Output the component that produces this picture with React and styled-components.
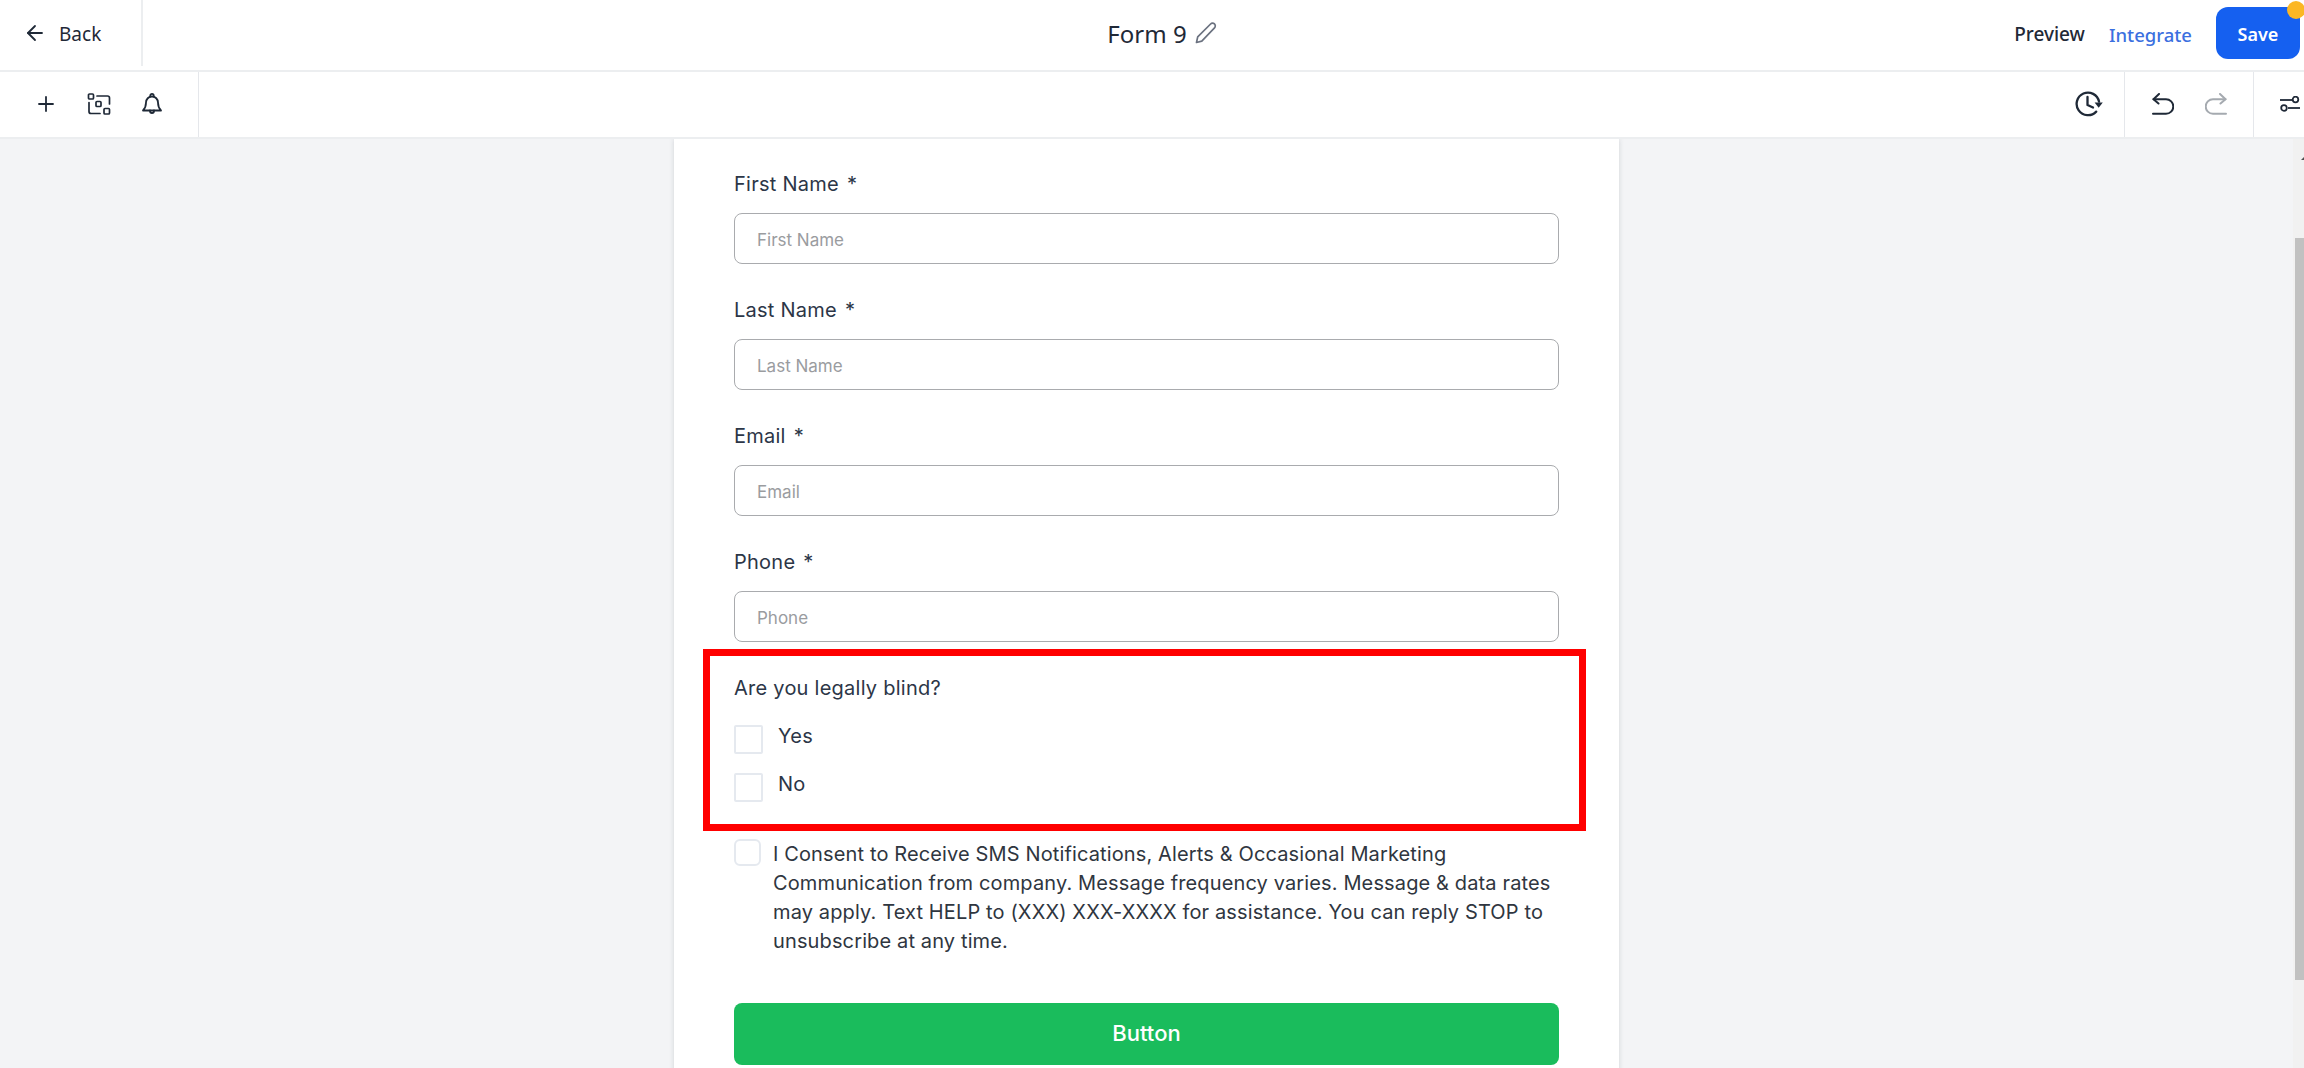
import React from "react";
import styled, { createGlobalStyle } from "styled-components";
import { ArrowLeft, Plus } from "lucide-react";

const Global = createGlobalStyle`
  html, body { margin: 0; padding: 0; height: 100%; overflow: hidden; background: #f3f4f6; }
  * { box-sizing: border-box; }
  body { font-family: "Inter", "Noto Sans", sans-serif; color: #1f2937; }
`;

const Page = styled.div`
  height: 1068px;
  display: flex;
  flex-direction: column;
`;

const TopBar = styled.header`
  height: 72px;
  flex: none;
  background: #fff;
  border-bottom: 2px solid #eceef0;
  padding-bottom: 4px;
  display: grid;
  grid-template-columns: 1fr auto 1fr;
  align-items: center;
  font-family: "Noto Sans", sans-serif;
`;

const BackLink = styled.div`
  justify-self: start;
  width: 143px;
  height: 66px;
  padding-left: 23px;
  border-right: 2px solid #eceef0;
  display: flex;
  align-items: center;
  gap: 12px;
  font-size: 19px;
  color: #1f2937;

  span {
    padding-top: 2px;
  }
`;

const Title = styled.div`
  margin-left: 20px;
  display: flex;
  align-items: center;
  gap: 8px;
  font-size: 24px;
  color: #1f2937;
`;

const TopActions = styled.div`
  justify-self: end;
  display: flex;
  align-items: center;
`;

const TextAction = styled.span`
  padding-top: 2px;
  font-size: ${(p) => (p.$accent ? "18.5px" : "19px")};
  font-weight: 500;
  color: ${(p) => (p.$accent ? "#3b6fe0" : "#1f2937")};
  margin-right: ${(p) => p.$gap}px;
`;

const SaveButton = styled.button`
  position: relative;
  width: 84px;
  height: 52px;
  border: 0;
  border-radius: 12px;
  background: #1560f0;
  color: #fff;
  font-family: inherit;
  font-size: 18px;
  font-weight: 600;
  margin-right: 4px;
  padding: 2px 0 0;
`;

const Dot = styled.span`
  position: absolute;
  top: -6px;
  right: -5px;
  width: 18px;
  height: 18px;
  border-radius: 50%;
  background: #fbb724;
`;

const ToolBar = styled.div`
  height: 67px;
  flex: none;
  background: #fff;
  border-bottom: 2px solid #eceef0;
  display: flex;
  justify-content: space-between;
  overflow: hidden;
`;

const ToolGroup = styled.div`
  display: flex;
  align-items: center;
  padding-bottom: 2px;
`;

const LeftTools = styled(ToolGroup)`
  width: 199px;
  padding-left: 34px;
  gap: 29px;
  border-right: 1px solid #e5e7eb;
`;

const RightTools = styled.div`
  display: flex;
`;

const RightCell = styled(ToolGroup)`
  width: ${(p) => p.$width}px;
  padding-left: ${(p) => p.$pad}px;
  gap: ${(p) => p.$gap || 0}px;
  border-right: ${(p) => (p.$edge ? "1px solid #e5e7eb" : "0")};
`;

const Canvas = styled.main`
  flex: 1;
  min-height: 0;
  display: flex;
  overflow: hidden;
`;

const Stage = styled.div`
  flex: 1;
  min-width: 0;
  display: flex;
  justify-content: center;
`;

const Sheet = styled.section`
  width: 945px;
  flex: none;
  height: 1000px;
  background: #fff;
  box-shadow: 0 0 5px rgba(30, 41, 59, 0.16);
  padding: 33px 60px 0;
`;

const Field = styled.div`
  height: 126px;
`;

const Label = styled.div`
  font-size: 20px;
  letter-spacing: 0.25px;
  line-height: 24px;
  color: #2c3647;
  margin-bottom: 17px;
`;

const Star = styled.span`
  margin-left: 8px;
`;

const Input = styled.div`
  height: 51px;
  border: 1px solid #a9abae;
  border-radius: 8px;
  padding: 2px 0 0 22px;
  display: flex;
  align-items: center;
  font-size: 17px;
  color: #9a9c9f;
`;

const Highlight = styled.div`
  width: 883px;
  height: 182px;
  margin: -27px 0 0 -31px;
  border: 7px solid #ff0000;
  padding: 20px 0 0 24px;
`;

const Question = styled.div`
  font-size: 20px;
  letter-spacing: 0.25px;
  line-height: 24px;
  color: #2c3647;
  margin-bottom: 24px;
`;

const Option = styled.label`
  display: flex;
  align-items: flex-start;
  gap: 15px;
  height: 48px;
  font-size: 20px;
  letter-spacing: 0.25px;
  line-height: 24px;
  color: #2c3647;
`;

const Box = styled.span`
  flex: none;
  display: block;
  width: ${(p) => p.$size}px;
  height: ${(p) => p.$size}px;
  margin-top: ${(p) => p.$top}px;
  border: 2px solid #e5e9ef;
  border-radius: ${(p) => p.$radius}px;
  background: #fff;
`;

const Consent = styled.div`
  display: flex;
  gap: 12px;
  margin-top: 8px;
  font-size: 20px;
  letter-spacing: 0.13px;
  line-height: 29px;
  color: #2f3640;
`;

const ConsentText = styled.p`
  margin: 0;
  flex: 1;
  padding-top: 1px;
`;

const GreenButton = styled.button`
  display: block;
  width: 100%;
  height: 62px;
  margin-top: 47px;
  border: 0;
  border-radius: 8px;
  background: #1abc5c;
  color: #fff;
  font-family: inherit;
  font-size: 22px;
  font-weight: 500;
  padding: 0 0 2px;
`;

const Scrollbar = styled.div`
  position: relative;
  flex: none;
  width: 11px;
  background: #f1f1f1;
  overflow: hidden;
  padding: 99px 0 0 2px;
`;

const Thumb = styled.div`
  height: 742px;
  background: #c1c1c1;
`;

const ScrollArrow = styled.span`
  position: absolute;
  top: 16px;
  left: 8px;
  width: 0;
  height: 0;
  border-left: 5px solid transparent;
  border-right: 5px solid transparent;
  border-bottom: 5px solid #505050;
`;

const FlipIcon = styled.svg`
  transform: ${(p) => (p.$flip ? "scaleX(-1)" : "none")};
`;

function EditIcon() {
  return (
    <svg width="22" height="22" viewBox="0 0 22 22" fill="none" stroke="#6b7280" strokeWidth="1.7" strokeLinejoin="round">
      <path d="M1.5 20.5l1.2-5.6L15.6 2a2.7 2.7 0 0 1 3.9 3.8L6.8 19.2z" />
    </svg>
  );
}

function StepsIcon() {
  return (
    <svg width="24" height="24" viewBox="0 0 24 24" fill="none" stroke="#1f2937" strokeWidth="1.7" strokeLinecap="round" strokeLinejoin="round">
      <rect x="1.5" y="2" width="5" height="5" rx="1" />
      <rect x="9" y="9.5" width="5" height="5" rx="1" />
      <rect x="17" y="16.5" width="5.5" height="5.5" rx="1" />
      <path d="M10 4h10.5a2 2 0 0 1 2 2v6" />
      <path d="M2 10.5v9a2 2 0 0 0 2 2h9" />
    </svg>
  );
}

function BellIcon() {
  return (
    <svg width="24" height="24" viewBox="0 0 24 24" fill="none" stroke="#1f2937" strokeWidth="1.8" strokeLinecap="round" strokeLinejoin="round">
      <path d="M12 4.5a6 6 0 0 1 6 6c0 4 1 6 3 8H3c2-2 3-4 3-8a6 6 0 0 1 6-6z" />
      <path d="M10.3 4.7V3.6a1.7 1.7 0 0 1 3.4 0v1.1" />
      <path d="M10 18.5v.5a2 2 0 0 0 4 0v-.5" />
    </svg>
  );
}

function HistoryIcon() {
  return (
    <svg width="28" height="26" viewBox="0 0 28 26" fill="none" stroke="#1f2937" strokeWidth="2.3" strokeLinecap="round" strokeLinejoin="round">
      <path d="M21.2 20.6A11.3 11.3 0 1 1 24 10.6" />
      <path d="M12.5 6v8l5.5 2.5" />
      <path d="M19.6 11.5h8.2l-4.1 5.2z" fill="#1f2937" stroke="none" />
    </svg>
  );
}

function TurnIcon({ flip, tone }) {
  return (
    <FlipIcon $flip={flip} width="22" height="22" viewBox="0 0 22 22" fill="none" stroke={tone} strokeWidth="2" strokeLinecap="round" strokeLinejoin="round">
      <path d="M7 1L1.5 6.2 6.5 10.5" />
      <path d="M1.5 6.2H14a7 7 0 0 1 0 14.6H1" />
    </FlipIcon>
  );
}

function SlidersIcon() {
  return (
    <svg width="20" height="16" viewBox="0 0 20 16" fill="none" stroke="#1f2937" strokeWidth="1.8">
      <path d="M0 4h12" />
      <circle cx="15.5" cy="3.5" r="2.8" />
      <path d="M8 12h12" />
      <circle cx="4" cy="12" r="2.8" />
    </svg>
  );
}

const fields = ["First Name", "Last Name", "Email", "Phone"];

export default function App() {
  return (
    <Page>
      <Global />
      <TopBar>
        <BackLink>
          <ArrowLeft size={24} strokeWidth={1.8} />
          <span>Back</span>
        </BackLink>
        <Title>
          Form 9
          <EditIcon />
        </Title>
        <TopActions>
          <TextAction $gap={24}>Preview</TextAction>
          <TextAction $accent $gap={24}>Integrate</TextAction>
          <SaveButton>
            Save
            <Dot />
          </SaveButton>
        </TopActions>
      </TopBar>
      <ToolBar>
        <LeftTools>
          <Plus size={24} strokeWidth={1.8} />
          <StepsIcon />
          <BellIcon />
        </LeftTools>
        <RightTools>
          <RightCell $width={80} $pad={30} $edge>
            <HistoryIcon />
          </RightCell>
          <RightCell $width={129} $pad={27} $gap={31} $edge>
            <TurnIcon tone="#1f2937" />
            <TurnIcon flip tone="#a5aab0" />
          </RightCell>
          <RightCell $width={50} $pad={26}>
            <SlidersIcon />
          </RightCell>
        </RightTools>
      </ToolBar>
      <Canvas>
        <Stage>
          <Sheet>
            {fields.map((f) => (
              <Field key={f}>
                <Label>
                  {f}
                  <Star>*</Star>
                </Label>
                <Input>{f}</Input>
              </Field>
            ))}
            <Highlight>
              <Question>Are you legally blind?</Question>
              <Option>
                <Box $size={29} $radius={2} $top={1} />
                Yes
              </Option>
              <Option>
                <Box $size={29} $radius={2} $top={1} />
                No
              </Option>
            </Highlight>
            <Consent>
              <Box $size={27} $radius={6} $top={0} />
              <ConsentText>
                I Consent to Receive SMS Notifications, Alerts &amp; Occasional Marketing Communication from company. Message frequency varies. Message &amp; data rates may apply. Text HELP to (XXX) XXX-XXXX for assistance. You can reply STOP to unsubscribe at any time.
              </ConsentText>
            </Consent>
            <GreenButton>Button</GreenButton>
          </Sheet>
        </Stage>
        <Scrollbar>
          <ScrollArrow />
          <Thumb />
        </Scrollbar>
      </Canvas>
    </Page>
  );
}
